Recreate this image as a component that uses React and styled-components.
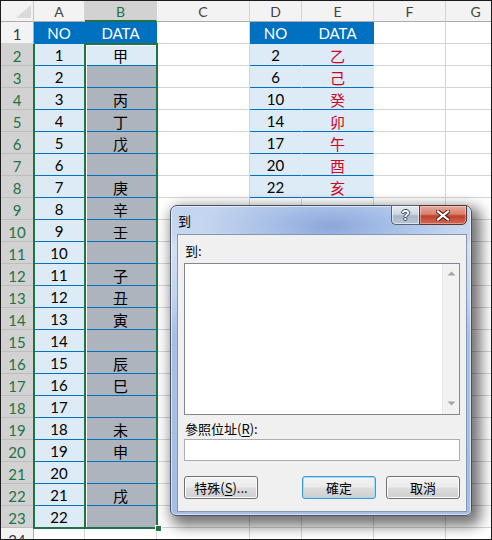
import React from 'react';
import styled, { createGlobalStyle } from 'styled-components';

const GlobalStyle = createGlobalStyle`
  html, body { margin: 0; padding: 0; background: #fff; }
  body { font-family: Lato, "Noto Sans CJK TC", sans-serif; }
  *, *::before, *::after { box-sizing: border-box; }
`;

const GREEN = '#217346';
const BLUE = '#0070c0';
const BAND = '#ddebf7';
const SEL = '#adb4bd';

const COLS = [
  { key: 'A', w: 51 },
  { key: 'B', w: 72, selected: true },
  { key: 'C', w: 93 },
  { key: 'D', w: 52 },
  { key: 'E', w: 72 },
  { key: 'F', w: 72 },
  { key: 'G', w: 60 },
];

const B_DATA = ['甲', '', '丙', '丁', '戊', '', '庚', '辛', '壬', '', '子', '丑', '寅', '', '辰', '巳', '', '未', '申', '', '戌', ''];
const E_DATA = [[2, '乙'], [6, '己'], [10, '癸'], [14, '卯'], [17, '午'], [20, '酉'], [22, '亥']];

function cellFor(row, col) {
  if (col === 'A') {
    if (row === 1) return { v: 'NO', kind: 'head' };
    if (row <= 23) return { v: String(row - 1), kind: 'band' };
  }
  if (col === 'B') {
    if (row === 1) return { v: 'DATA', kind: 'head' };
    if (row === 2) return { v: B_DATA[0], kind: 'band' };
    if (row <= 23) return { v: B_DATA[row - 2], kind: 'sel' };
  }
  if (col === 'D') {
    if (row === 1) return { v: 'NO', kind: 'head' };
    if (row <= 8) return { v: String(E_DATA[row - 2][0]), kind: 'band' };
  }
  if (col === 'E') {
    if (row === 1) return { v: 'DATA', kind: 'head' };
    if (row <= 8) return { v: E_DATA[row - 2][1], kind: 'band', red: true };
  }
  return { v: '', kind: 'plain' };
}

const Frame = styled.div`
  position: relative;
  width: 492px;
  height: 540px;
  border: 1px solid #1c1c1c;
  overflow: hidden;
  background: #fff;
`;

const Sheet = styled.div`
  display: flex;
  flex-direction: column;
`;

const HeaderRow = styled.div`
  display: flex;
  height: 21px;
  flex: none;
`;

const Corner = styled.div`
  position: relative;
  flex: none;
  width: 33px;
  height: 21px;
  background: #f3f3f3;
  border-right: 1px solid #c6c6c6;
  border-bottom: 1px solid #ababab;
  &::after {
    content: '';
    position: absolute;
    right: 2px;
    bottom: 3px;
    width: 15px;
    height: 13px;
    background: #dadada;
    clip-path: polygon(100% 0, 100% 100%, 0 100%);
  }
`;

const ColHeader = styled.div`
  flex: none;
  width: ${p => p.$w}px;
  height: 21px;
  display: flex;
  align-items: center;
  justify-content: center;
  background: ${p => (p.$selected ? '#d2d2d2' : '#f3f3f3')};
  color: ${p => (p.$selected ? GREEN : '#444')};
  border-right: 1px solid #d4d4d4;
  border-bottom: ${p => (p.$selected ? `2px solid ${GREEN}` : '1px solid #ababab')};
  font-size: 14px;
  padding-top: ${p => (p.$selected ? '1px' : '0')};
`;

const SheetRow = styled.div`
  display: flex;
  height: 22px;
  flex: none;
`;

const RowHeader = styled.div`
  flex: none;
  width: 33px;
  height: 22px;
  display: flex;
  align-items: center;
  justify-content: center;
  background: ${p => (p.$selected ? '#d2d2d2' : '#f3f3f3')};
  color: ${p => (p.$selected ? GREEN : '#333a46')};
  border-right: 1px solid #ababab;
  border-bottom: 1px solid ${p => (p.$selected ? '#bdbdbd' : '#d4d4d4')};
  font-size: 15px;
  padding-top: 2px;
`;

const KIND = {
  plain: { bg: '#fff', right: '#d4d4d4', bottom: '#d4d4d4', color: '#000' },
  head: { bg: BLUE, right: BLUE, bottom: BLUE, color: '#fff' },
  band: { bg: BAND, right: BAND, bottom: BLUE, color: '#000' },
  sel: { bg: SEL, right: SEL, bottom: BLUE, color: '#000' },
};

const Cell = styled.div`
  flex: none;
  width: ${p => p.$w}px;
  height: 22px;
  display: flex;
  align-items: center;
  justify-content: center;
  background: ${p => KIND[p.$kind].bg};
  color: ${p => (p.$red ? '#d0001c' : KIND[p.$kind].color)};
  border-right: 1px solid ${p => KIND[p.$kind].right};
  border-bottom: 1px solid ${p => KIND[p.$kind].bottom};
  font-size: 15px;
  padding-top: 1px;
`;

const Selection = styled.div`
  position: absolute;
  left: ${p => p.$x}px;
  top: ${p => p.$y}px;
  width: ${p => p.$w}px;
  height: ${p => p.$h}px;
  border: 2px solid ${GREEN};
  border-top-width: ${p => (p.$noTop ? 0 : 2)}px;
  box-shadow: ${p => (p.$inner ? 'inset 1px 1px 0 #fff' : 'none')};
  pointer-events: none;
`;

const FillHandle = styled.div`
  position: absolute;
  left: 154px;
  top: 524px;
  width: 7px;
  height: 7px;
  background: ${GREEN};
  border: 1px solid #fff;
`;

/* ---------- Dialog ---------- */

const Window = styled.div`
  position: absolute;
  left: 169px;
  top: 204px;
  width: 302px;
  height: 311px;
  display: flex;
  flex-direction: column;
  border: 1px solid #485263;
  border-radius: 7px 7px 6px 6px;
  background:
    radial-gradient(ellipse 130px 40px at 160px 20px, rgba(140, 166, 218, 1) 0%, rgba(158, 184, 228, 0.7) 50%, rgba(190, 210, 238, 0) 100%),
    linear-gradient(180deg, #c3d5ee 0px, #c6d7ef 28px, #d3e0f2 40px, #c1d4ee 90px, #a9c0e6 130px, #a6bde5 100%);
  box-shadow: 5px 6px 14px 4px rgba(0, 0, 0, 0.55), inset 0 0 0 1px rgba(255, 255, 255, 0.55);
  font-family: "Noto Sans CJK TC", "Liberation Sans", sans-serif;
  font-size: 13px;
  color: #000;
`;

const TitleBar = styled.div`
  display: flex;
  align-items: flex-start;
  height: 28px;
  flex: none;
  padding-left: 7px;
`;

const Title = styled.div`
  align-self: center;
  font-size: 13px;
  line-height: 16px;
  padding-top: 1px;
`;

const CaptionButtons = styled.div`
  display: flex;
  margin-left: auto;
  margin-right: 4px;
  margin-top: -1px;
  height: 20px;
`;

const HelpButton = styled.div`
  width: 28px;
  height: 20px;
  display: flex;
  align-items: center;
  justify-content: center;
  border: 1px solid #566276;
  border-right: none;
  border-radius: 0 0 0 5px;
  background: linear-gradient(180deg, #e4eaf2 0%, #cdd7e4 45%, #aab7c9 55%, #b9c6d7 100%);
  box-shadow: inset 0 0 0 1px rgba(255, 255, 255, 0.55);
  color: #fff;
  font: bold 14px "Liberation Sans", sans-serif;
  text-shadow: 1px 0 0 #3b4656, -1px 0 0 #3b4656, 0 1px 0 #3b4656, 0 -1px 0 #3b4656;
`;

const CloseButton = styled.div`
  width: 48px;
  height: 20px;
  display: flex;
  align-items: center;
  justify-content: center;
  border: 1px solid #5a3530;
  border-radius: 0 0 5px 0;
  background: linear-gradient(180deg, #e5a99c 0%, #d9826f 45%, #c2402b 55%, #cf6a55 100%);
  box-shadow: inset 0 0 0 1px rgba(255, 255, 255, 0.35);
`;

const Client = styled.div`
  flex: 1;
  margin: 0 4px 3px 6px;
  border: 1px solid #8596b0;
  background: #f0f0f0;
  display: flex;
  flex-direction: column;
  padding: 7px 6px 0 6px;
`;

const Label = styled.div`
  height: 17px;
  line-height: 17px;
  padding-left: 1px;
  margin-top: ${p => p.$mt || 0}px;
  u { text-underline-offset: 2px; }
`;

const ListBox = styled.div`
  display: flex;
  height: 152px;
  margin-top: 4px;
  border: 1px solid #828790;
  background: #fff;
`;

const ScrollTrack = styled.div`
  margin-left: auto;
  width: 17px;
  height: 100%;
  background: #f2f2f2;
  border-left: 1px solid #eaeaea;
  display: flex;
  flex-direction: column;
  justify-content: space-between;
  align-items: center;
  padding: 7px 0 8px;
`;

const TextInput = styled.div`
  height: 22px;
  margin-top: 2px;
  border: 1px solid #abadb3;
  background: #fff;
`;

const ButtonRow = styled.div`
  display: flex;
  margin-top: 15px;
  gap: 10px;
  & > :nth-child(2) { margin-left: auto; }
`;

const DlgButton = styled.div`
  width: 74px;
  height: 23px;
  display: flex;
  align-items: center;
  justify-content: center;
  border: 1px solid ${p => (p.$default ? '#3c9ad6' : '#707070')};
  border-radius: 3px;
  background: linear-gradient(180deg, #f3f3f3 0%, #ebebeb 48%, #dddddd 52%, #cfcfcf 100%);
  box-shadow: inset 0 0 0 1px ${p => (p.$default ? '#9edcf7' : '#fbfbfb')};
  font-size: 13px;
  line-height: 16px;
  u { text-underline-offset: 2px; }
`;

const Arrow = ({ up }) => (
  <svg width="9" height="5" viewBox="0 0 9 5">
    <path d={up ? 'M0.5 4.5 L4.5 0.5 L8.5 4.5 Z' : 'M0.5 0.5 L8.5 0.5 L4.5 4.5 Z'} fill="#a3a3a3" />
  </svg>
);

const CloseIcon = () => (
  <svg width="14" height="11" viewBox="0 0 14 11">
    <path d="M2 1.5 L12 9.5 M12 1.5 L2 9.5" stroke="#4a1e17" strokeWidth="4.2" strokeLinecap="square" />
    <path d="M2 1.5 L12 9.5 M12 1.5 L2 9.5" stroke="#ffffff" strokeWidth="2.2" strokeLinecap="square" />
  </svg>
);

function GoToDialog() {
  return (
    <Window>
      <TitleBar>
        <Title>到</Title>
        <CaptionButtons>
          <HelpButton>?</HelpButton>
          <CloseButton><CloseIcon /></CloseButton>
        </CaptionButtons>
      </TitleBar>
      <Client>
        <Label>到:</Label>
        <ListBox>
          <ScrollTrack>
            <Arrow up />
            <Arrow />
          </ScrollTrack>
        </ListBox>
        <Label $mt={5}>參照位址(<u>R</u>):</Label>
        <TextInput />
        <ButtonRow>
          <DlgButton>特殊(<u>S</u>)...</DlgButton>
          <DlgButton $default>確定</DlgButton>
          <DlgButton>取消</DlgButton>
        </ButtonRow>
      </Client>
    </Window>
  );
}

export default function App() {
  const rows = Array.from({ length: 24 }, (_, i) => i + 1);
  return (
    <>
      <GlobalStyle />
      <Frame>
        <Sheet>
          <HeaderRow>
            <Corner />
            {COLS.map(c => (
              <ColHeader key={c.key} $w={c.w} $selected={c.selected}>{c.key}</ColHeader>
            ))}
          </HeaderRow>
          {rows.map(r => (
            <SheetRow key={r}>
              <RowHeader $selected={r >= 2 && r <= 23}>{r}</RowHeader>
              {COLS.map(c => {
                const cell = cellFor(r, c.key);
                return (
                  <Cell key={c.key} $w={c.w} $kind={cell.kind} $red={cell.red}>{cell.v}</Cell>
                );
              })}
            </SheetRow>
          ))}
        </Sheet>
        <Selection $x={32} $y={43} $w={54} $h={485} $noTop />
        <Selection $x={83} $y={42} $w={74} $h={486} $inner />
        <FillHandle />
        <GoToDialog />
      </Frame>
    </>
  );
}
